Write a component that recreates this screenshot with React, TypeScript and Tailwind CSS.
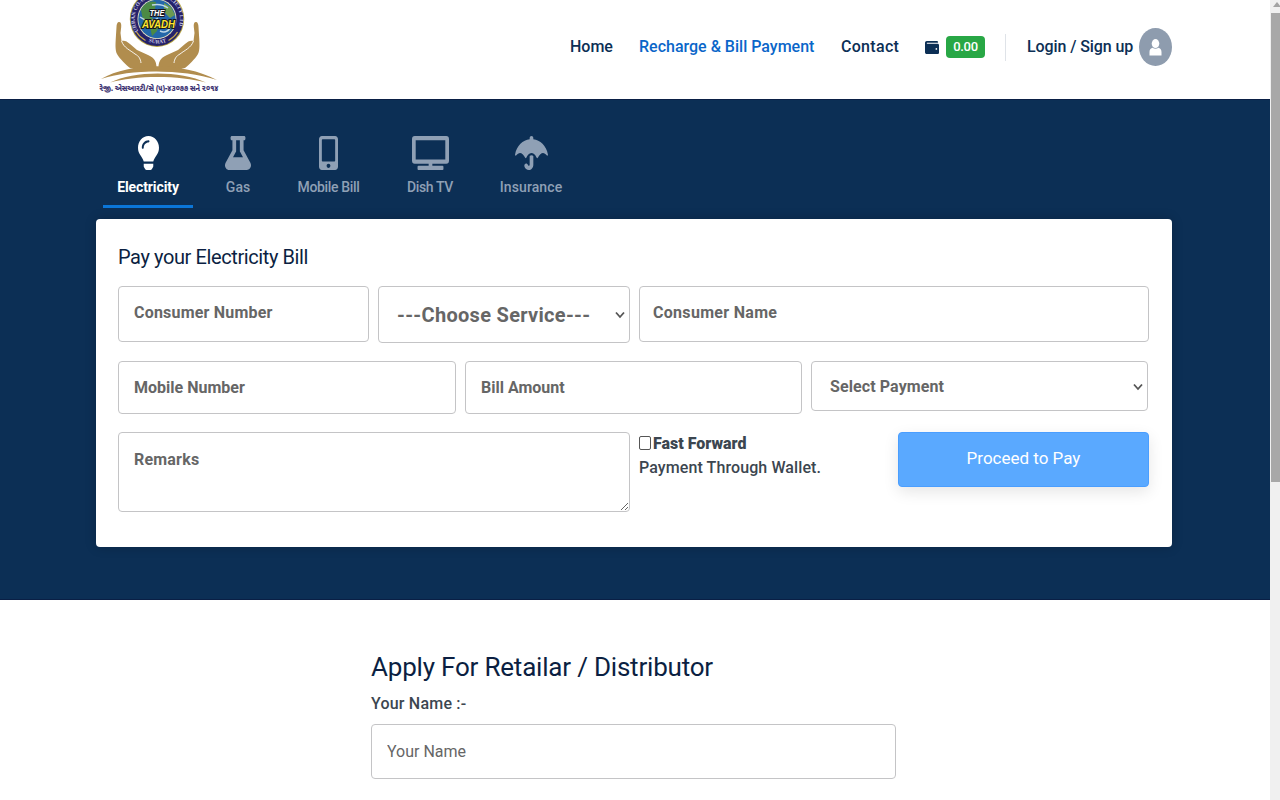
import { FaFlask, FaLightbulb, FaMobileAlt, FaTv, FaUmbrella, FaWallet } from "react-icons/fa";

const field =
  "block rounded-[4px] border border-[#c4c4c6] bg-white text-[16px] text-[#4c4d4d] outline-none placeholder:text-[#666] placeholder:opacity-100";

function Hand() {
  return (
    <g>
      <path
        d="M29 22 C31 22 31.500 24 31.200 27 L30.500 33 L31.500 41 C34 40 37 41 40 44 L47 50 L58 55 C65 58 67 62 66.500 71 L49 71.500 C46 70.500 44 68.500 40 68 C36 65 30 59 27 54 C25 50 25.500 44 25.800 38 L26.500 27 C26.500 24 27.500 22 29 22 Z"
        fill="#b18d4e"
      />
      <path d="M31.500 41 C34 48 40 50 45 54 C49 56 50.500 59 51 63" fill="none" stroke="#fff" strokeWidth="0.9" />
    </g>
  );
}

function Logo() {
  return (
    <svg className="block h-[99px] w-[130px]" viewBox="0 0 130 99">
      <defs>
        <path id="arcRight" d="M73 -3 A22.500 22.500 0 0 1 86.500 31" />
        <path id="arcLeft" d="M48.500 31 A22.500 22.500 0 0 1 60 -2.500" />
        <path id="arcBottom" d="M43 19 A24.500 24.500 0 0 0 92 19" />
      </defs>
      <Hand />
      <g transform="translate(135 0) scale(-1 1)">
        <Hand />
      </g>
      <g fill="#b18d4e">
        <path d="M11 79 C42 62 92 62 127 80 C92 69 42 69 11 79 Z" />
        <path d="M20 82.500 C45 70.500 90 70.500 116 82.500 C90 75 45 75 20 82.500 Z" />
      </g>
      <ellipse cx="67" cy="19" rx="27.200" ry="28" fill="#b5a33f" />
      <ellipse cx="67" cy="19" rx="26.300" ry="27" fill="#25226b" />
      <ellipse cx="67" cy="19" rx="19.500" ry="20" fill="#e8e2c0" />
      <ellipse cx="67" cy="19" rx="18.700" ry="19.200" fill="#2467a9" />
      <path d="M51 10 C54 3 60 0 66 2 L65 9 L60 12 L62 18 L69 23 L67 31 L62 36 L60 27 L53 20 Z" fill="#4c8a45" />
      <path d="M74 3 L81 7 L85 15 L80 18 L74 12 Z M77 25 L83 25 L78 32 Z" fill="#6b9b52" />
      <path d="M50 17 Q60 24 68 18 M70 31 Q76 34 80 28 M62 5 Q71 3 78 8" fill="none" stroke="#bcd6e8" strokeWidth="1.500" />
      <g fontFamily="Liberation Serif, serif" fontWeight="700" fontSize="5.500" fill="#c9c7e2">
        <text>
          <textPath href="#arcLeft">URBAN CO-OP</textPath>
        </text>
        <text>
          <textPath href="#arcRight">SOCIETY LTD</textPath>
        </text>
        <text textAnchor="middle">
          <textPath href="#arcBottom" startOffset="50%">SURAT</textPath>
        </text>
      </g>
      <path d="M46.500 32 Q49.500 37 55.500 40.500 M87.500 32 Q84.500 37 78.500 40.500" fill="none" stroke="#c7a84c" strokeWidth="1.200" />
      <g fontFamily="Liberation Sans, sans-serif" fontWeight="700" fontStyle="italic" stroke="#17151c" strokeWidth="2" paintOrder="stroke" textAnchor="middle">
        <text x="67" y="15.500" fontSize="8.500" fill="#fff" textLength="15" lengthAdjust="spacingAndGlyphs">THE</text>
        <text x="68.500" y="28" fontSize="10" fill="#ffe72e" textLength="33" lengthAdjust="spacingAndGlyphs">AVADH</text>
      </g>
      <g fontFamily="Noto Sans Gujarati, Noto Sans, sans-serif" fontWeight="700" fontSize="8" fill="#3a3070" stroke="#3a3070" strokeWidth="0.200">
        <text x="9.500" y="91" textLength="119" lengthAdjust="spacingAndGlyphs">રેજી. એસઆરટી/સે (૫)-૪૩૦૭૭ સને ૨૦૧૪</text>
      </g>
    </svg>
  );
}

function Chevron({ className }: { className: string }) {
  return (
    <svg className={className} viewBox="0 0 10 8" fill="none">
      <path d="M1 1.500 L5 6 L9 1.500" stroke="#555" strokeWidth="1.800" />
    </svg>
  );
}

function Header() {
  return (
    <header className="flex h-[99px] items-start bg-white pl-[90px] text-[16px] font-medium text-[#0c2f55]">
      <Logo />
      <nav className="ml-[350px] flex h-[94px] items-center whitespace-nowrap">
        <a className="w-[69px]">Home</a>
        <a className="w-[202px] text-[#0a66c9]">Recharge &amp; Bill Payment</a>
        <a className="w-[84px] tracking-[0.3px]">Contact</a>
        <FaWallet preserveAspectRatio="none" className="h-[15px] w-[14px]" />
        <span className="ml-[7px] flex h-[22px] w-[39px] items-center justify-center rounded-[4px] bg-[#28a745] text-[13px] tracking-[-0.3px] text-white">0.00</span>
        <span className="ml-[20px] h-[27px] w-px bg-[#dfe3e8]" />
        <a className="ml-[21px] w-[112px] tracking-[-0.1px]">Login / Sign up</a>
        <span className="flex h-[38px] w-[33px] items-center justify-center rounded-[50%] bg-[#8e9cae]">
          <svg className="h-[17px] w-[13px]" viewBox="0 0 13 17" fill="#fff">
            <ellipse cx="6.500" cy="4.600" rx="3.800" ry="4.500" />
            <path d="M0.500 16.500 V13 C0.500 10.500 2 9.300 3.600 8.800 C5.300 10.200 7.700 10.200 9.400 8.800 C11 9.300 12.500 10.500 12.500 13 V16.500 Z" />
          </svg>
        </span>
      </nav>
    </header>
  );
}

function Tabs() {
  const icon = "h-[34px]";
  return (
    <div className="flex h-[108px] pl-[103px] pt-[36px] text-[14px] font-medium text-[#8fa0b5]">
      <div className="flex w-[90px] flex-col items-center border-b-[3px] border-[#0b76d8] text-white">
        <FaLightbulb preserveAspectRatio="none" className={`${icon} w-[21px]`} />
        <span className="mt-[7px] font-bold tracking-[-0.1px]">Electricity</span>
      </div>
      <div className="flex w-[90px] flex-col items-center">
        <FaFlask preserveAspectRatio="none" className={`${icon} w-[26px]`} />
        <span className="mt-[7px]">Gas</span>
      </div>
      <div className="flex w-[91px] flex-col items-center">
        <FaMobileAlt preserveAspectRatio="none" className={`${icon} w-[19px]`} />
        <span className="mt-[7px] tracking-[-0.35px]">Mobile Bill</span>
      </div>
      <div className="flex w-[112px] flex-col items-center">
        <FaTv preserveAspectRatio="none" className={`${icon} w-[37px]`} />
        <span className="mt-[7px] tracking-[-0.35px]">Dish TV</span>
      </div>
      <div className="flex w-[90px] flex-col items-center">
        <FaUmbrella preserveAspectRatio="none" className={`${icon} w-[33px]`} />
        <span className="mt-[7px] tracking-[0.1px]">Insurance</span>
      </div>
    </div>
  );
}

function BillCard() {
  return (
    <form className="ml-[96px] mt-[11px] h-[328px] w-[1076px] rounded-[4px] bg-white pl-[22px] pt-[24px] shadow-[0_0_12px_rgba(0,0,0,0.2)]">
      <h2 className="h-[43px] text-[20px] leading-[28px] tracking-[-0.4px] text-[#0b1f42]">Pay your Electricity Bill</h2>
      <div className="flex h-[75px] items-start">
        <input className={`${field} h-[56px] w-[251px] px-[15px] pb-[3px] font-bold tracking-[0.2px]`} placeholder="Consumer Number" />
        <div className="relative ml-[9px]">
          <select className={`${field} h-[57px] w-[252px] appearance-none pl-[18px] text-[20px] font-bold tracking-[0.3px] text-[#666]`}>
            <option>---Choose Service---</option>
          </select>
          <Chevron className="absolute right-[5px] top-[25px] h-[8px] w-[10px]" />
        </div>
        <input className={`${field} ml-[9px] h-[56px] w-[510px] px-[13px] pb-[3px] font-bold tracking-[0.3px]`} placeholder="Consumer Name" />
      </div>
      <div className="flex h-[71px] items-start">
        <input className={`${field} h-[53px] w-[338px] px-[15px] font-bold`} placeholder="Mobile Number" />
        <input className={`${field} ml-[9px] h-[53px] w-[337px] px-[15px] font-bold`} placeholder="Bill Amount" />
        <div className="relative ml-[9px]">
          <select className={`${field} h-[50px] w-[337px] appearance-none pl-[18px] pt-[2px] font-bold tracking-[0.1px] text-[#666]`}>
            <option>Select Payment</option>
          </select>
          <Chevron className="absolute right-[5px] top-[22px] h-[8px] w-[10px]" />
        </div>
      </div>
      <div className="flex items-start">
        <textarea className={`${field} h-[80px] w-[512px] px-[15px] pt-[15px] font-bold tracking-[0.2px]`} placeholder="Remarks" />
        <label className="ml-[9px] w-[259px] text-[16px] leading-[24px] text-[#3c4650]">
          <span className="flex items-center">
            <input type="checkbox" className="mb-[2px] h-[14px] w-[12px] appearance-none rounded-[2px] border border-[#555] bg-white" />
            <b className="ml-[2px] font-black">Fast Forward</b>
          </span>
          <span className="font-medium tracking-[0.1px]">Payment Through Wallet.</span>
        </label>
        <button type="button" className="h-[55px] w-[251px] rounded-[4px] border border-[#4a9eff] bg-[#5aa9ff] pb-[2px] text-[17px] text-white shadow-[0_5px_15px_rgba(0,0,0,0.1)]">
          Proceed to Pay
        </button>
      </div>
    </form>
  );
}

export default function App() {
  return (
    <div className="flex h-[800px] w-[1280px] overflow-hidden bg-white" style={{ fontFamily: 'Roboto, "Liberation Sans", sans-serif' }}>
      <div className="h-full w-[1270px]">
        <Header />
        <main>
          <section className="h-[501px] border-y border-[#0a1f45] bg-[#0c2f55]">
            <Tabs />
            <BillCard />
          </section>
          <section className="pl-[371px] pt-[48px]">
            <h1 className="h-[42px] text-[26px] leading-[38px] tracking-[-0.2px] text-[#0b1f42]">Apply For Retailar / Distributor</h1>
            <label className="block h-[34px] text-[16px] font-medium leading-[27px] tracking-[0.2px] text-[#3c4650]">Your Name :-</label>
            <input className={`${field} h-[55px] w-[525px] px-[15px]`} placeholder="Your Name" />
          </section>
        </main>
      </div>
      <aside className="flex h-full w-[10px] flex-col bg-[#f0f0f0] pl-[1px]">
        <svg className="ml-[1px] h-[13px] w-[8px]" viewBox="0 0 8 13">
          <path d="M1 7 L5 2 L9 7 Z" fill="#a3a3a3" />
        </svg>
        <div className="h-[469px] bg-[#a8a8a8]" />
      </aside>
    </div>
  );
}
